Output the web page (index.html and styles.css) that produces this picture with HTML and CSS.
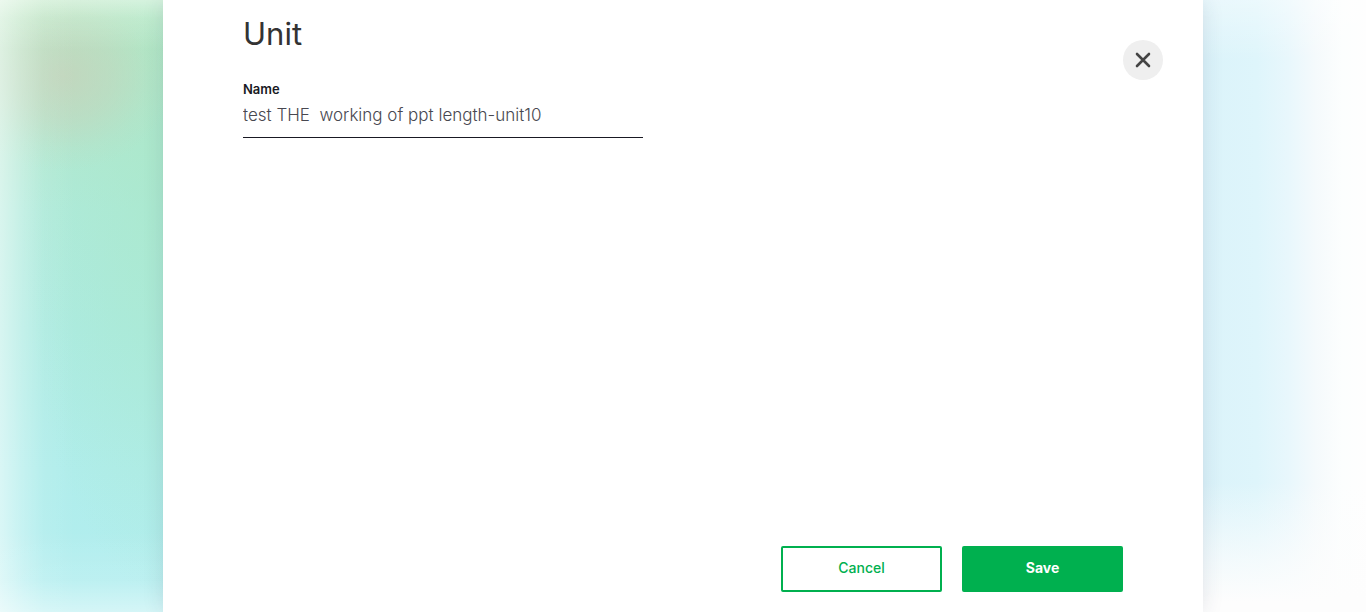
FILE: index.html
```html
<!DOCTYPE html>
<html lang="en">
<head>
<meta charset="utf-8">
<meta name="viewport" content="width=device-width, initial-scale=1">
<title>Unit</title>
<link rel="stylesheet" href="styles.css">
</head>
<body class="page">
<main class="modal" role="dialog" aria-labelledby="unit-title">
  <form class="unit-form">
    <div class="unit-top">
      <div class="unit-fields">
        <h1 class="unit-title" id="unit-title">Unit</h1>
        <label class="field-label" for="unit-name">Name</label>
        <input class="field-input" id="unit-name" type="text" value="test THE  working of ppt length-unit10">
      </div>
      <button class="close-button" type="button" aria-label="Close">
        <svg class="close-icon" viewBox="0 0 16 16" aria-hidden="true"><path d="M2 2 14 14M14 2 2 14"/></svg>
      </button>
    </div>
    <div class="actions">
      <button class="button button-outline" type="button">Cancel</button>
      <button class="button button-solid" type="submit">Save</button>
    </div>
  </form>
</main>
</body>
</html>
```

FILE: styles.css
```css
* {
  box-sizing: border-box;
}

.page {
  margin: 0;
  min-height: 100vh;
  display: flex;
  justify-content: center;
  padding: 0 163px;
  font-family: Inter, "Liberation Sans", sans-serif;
  background:
    linear-gradient(to bottom, rgba(255, 255, 255, 0.45), rgba(255, 255, 255, 0.18) 18px, rgba(255, 255, 255, 0) 50px) left / 50% 100% no-repeat,
    linear-gradient(to top, rgba(255, 255, 255, 0.45), rgba(255, 255, 255, 0.14) 32px, rgba(255, 255, 255, 0) 80px) left / 50% 100% no-repeat,
    linear-gradient(to right, rgba(255, 255, 255, 0.52), rgba(255, 255, 255, 0.28) 22px, rgba(255, 255, 255, 0.08) 44px, rgba(255, 255, 255, 0) 75px) left / 50% 100% no-repeat,
    radial-gradient(ellipse 110px 95px at 64px 76px, rgba(196, 212, 188, 0.85), rgba(196, 212, 188, 0.5) 45%, rgba(196, 212, 188, 0.14) 78%, rgba(196, 212, 188, 0)) left / 50% 100% no-repeat,
    radial-gradient(ellipse 150px 420px at 170px 180px, rgba(168, 232, 200, 0.65), rgba(168, 232, 200, 0)) left / 50% 100% no-repeat,
    linear-gradient(to bottom, #b8e8c0 0, #b4e6ca 90px, #afeadb 210px, #adebe2 330px, #b0edeb 470px, #b2eef0 100%) left / 50% 100% no-repeat,
    linear-gradient(to top, #fdfdfd 10px, rgba(253, 253, 253, 0.7) 50px, rgba(253, 253, 253, 0) 130px) right / 50% 100% no-repeat,
    linear-gradient(to bottom, rgba(255, 255, 255, 0.4), rgba(255, 255, 255, 0) 60px) right / 50% 100% no-repeat,
    linear-gradient(to left, #fefefe 0, #fcfefe 24px, #f5fafc 50px, #e8f7fc 78px, #def5fb 110px, #dbf3fa 163px) right / 50% 100% no-repeat;
}

.modal {
  flex: 1;
  display: flex;
  background: #fff;
  box-shadow: 0 0 20px rgba(40, 50, 80, 0.12);
  clip-path: inset(0 -20px);
}

.unit-form {
  flex: 1;
  display: flex;
  flex-direction: column;
  justify-content: space-between;
  padding: 14px 80px 20px;
}

.unit-top {
  display: flex;
  justify-content: space-between;
  align-items: flex-start;
}

.unit-fields {
  flex: 0 1 400px;
  display: flex;
  flex-direction: column;
}

.unit-title {
  margin: 0 0 25px;
  font-size: 31px;
  line-height: 40px;
  font-weight: 400;
  color: #333;
}

.field-label {
  font-size: 13px;
  line-height: 20px;
  font-weight: 600;
  color: #191923;
}

.field-input {
  width: 100%;
  height: 39px;
  margin: 0;
  padding: 0 0 6px;
  border: 0;
  border-bottom: 1px solid #191923;
  border-radius: 0;
  outline: 0;
  background: transparent;
  font: 300 17px Inter, "Liberation Sans", sans-serif;
  color: #484850;
}

.close-button {
  display: grid;
  place-items: center;
  width: 40px;
  height: 40px;
  margin: 26px -40px 0 0;
  padding: 0;
  border: 0;
  border-radius: 50%;
  background: #efefef;
}

.close-icon {
  width: 16px;
  height: 16px;
  fill: none;
  stroke: #444;
  stroke-width: 2.6;
  stroke-linecap: round;
}

.actions {
  display: flex;
  justify-content: flex-end;
  gap: 20px;
}

.button {
  width: 161px;
  height: 46px;
  padding: 0 0 4px;
  border: 2px solid #00b04f;
  border-radius: 2px;
  font: 500 14px Inter, "Liberation Sans", sans-serif;
}

.button-outline {
  background: #fff;
  color: #00b04f;
}

.button-solid {
  background: #00b04f;
  color: #fff;
  font-weight: 700;
}
```
